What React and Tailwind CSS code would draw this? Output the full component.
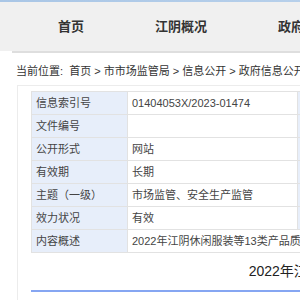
import React from 'react';

const navItems = ['首页', '江阴概况', '政府信息公开', '政务服务', '互动交流'];

const rows = [
  ['信息索引号', '01404053X/2023-01474', '生成日期', '2023-01-04'],
  ['文件编号', '', '发布机构', '江阴市市场监督管理局'],
  ['公开形式', '网站', '公开范围', '面向全社会'],
  ['有效期', '长期', '公开时限', '长期公开'],
  ['主题（一级）', '市场监管、安全生产监管', '主题（二级）', '质量监督'],
  ['效力状况', '有效', '体裁', '其他'],
];

const font = { fontFamily: '"Liberation Sans", "Noto Sans CJK SC", sans-serif' };

const App = () => {
  return (
    <div className="w-full min-h-[300px] overflow-hidden bg-white" style={font}>
      <div className="w-[1200px]">
        {/* top strip */}
        <div className="h-[2px] bg-gradient-to-r from-[#a9c6e6] via-[#c4d9ef] to-[#a9c6e6]" />

        {/* nav */}
        <div className="h-[49px] bg-[#f0f0f0] flex items-center gap-[71px] pl-[58px] pt-[1px]">
          {navItems.map((item) => (
            <span key={item} className="text-[13px] font-bold text-[#333]">
              {item}
            </span>
          ))}
        </div>
        <div className="ml-[12px] h-[2px] bg-[#dedede]" />

        {/* breadcrumb */}
        <div className="pl-[16px] pt-[8px] text-[11px] leading-[20px] text-[#333]">
          当前位置:&nbsp; 首页 &gt; 市市场监管局 &gt; 信息公开 &gt; 政府信息公开 &gt; 法定主动公开内容
        </div>

        {/* content box */}
        <div className="ml-[17px] mt-[4px] w-[804px] border border-[#ececec] px-[13px] pt-[5px] pb-[20px]">
          <table className="w-full border-collapse text-[11px] text-[#444]">
            <tbody>
              {rows.map(([l1, v1, l2, v2]) => (
                <tr key={l1} className="h-[23px]">
                  <td className="w-[96px] bg-[#e7eefa] border border-[#e2e2e2] px-[4px]">{l1}</td>
                  <td className="w-[170px] border border-[#e2e2e2] px-[4px]">{v1}</td>
                  <td className="w-[96px] bg-[#e7eefa] border border-[#e2e2e2] px-[4px]">{l2}</td>
                  <td className="border border-[#e2e2e2] px-[4px]">{v2}</td>
                </tr>
              ))}
              <tr className="h-[23px]">
                <td className="bg-[#e7eefa] border border-[#e2e2e2] px-[4px]">内容概述</td>
                <td colSpan={3} className="border border-[#e2e2e2] px-[4px]">
                  2022年江阴休闲服装等13类产品质量监督抽查结果
                </td>
              </tr>
            </tbody>
          </table>

          <h1 className="mt-[8px] text-center text-[14px] leading-[20px] text-[#222]">
            2022年江阴休闲服装等13类产品质量监督抽查结果公告
          </h1>
          <div className="mt-[9px] h-[2px] bg-[#86a6f2]" />
        </div>
      </div>
    </div>
  );
};

export default App;
